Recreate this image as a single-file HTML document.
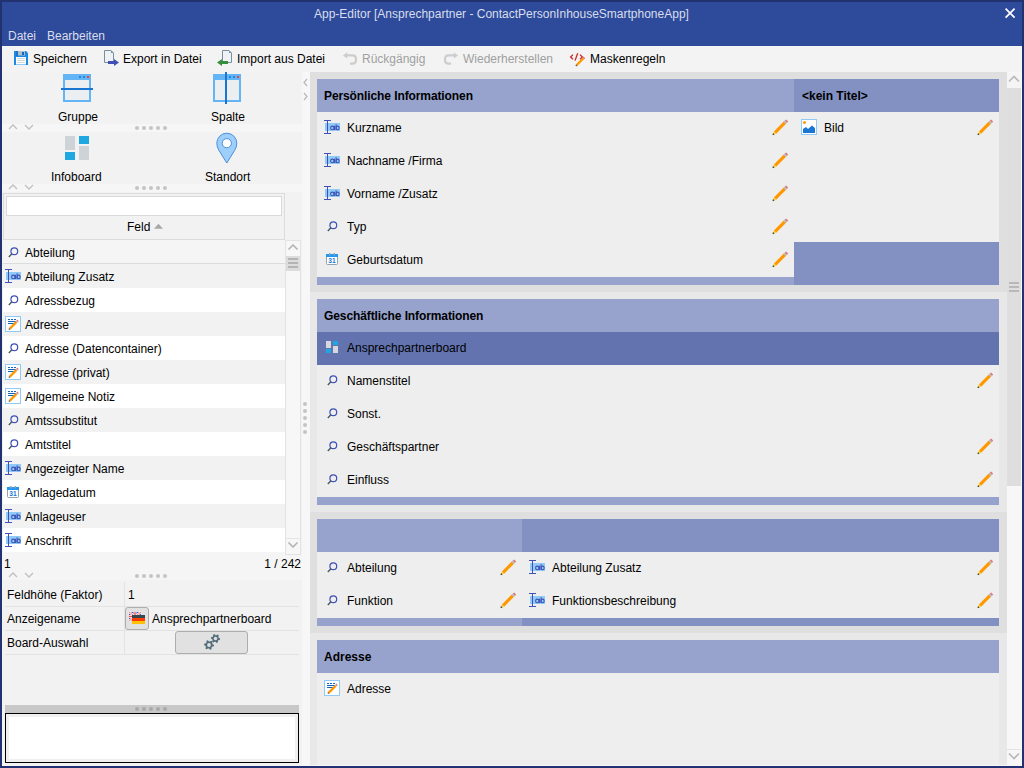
<!DOCTYPE html>
<html><head><meta charset="utf-8"><title>App-Editor</title>
<style>
*{margin:0;padding:0;box-sizing:border-box}
html,body{width:1024px;height:768px;overflow:hidden}
body{background:#223170;font-family:"Liberation Sans",sans-serif;font-size:12px;color:#000;position:relative}
.a{position:absolute}
.t{position:absolute;white-space:nowrap;line-height:14px}
svg{overflow:visible}
</style></head><body>
<div class="a" style="left:2px;top:2px;width:1020px;height:44px;background:#2e4a9a;"></div>
<div class="t" style="left:314px;top:7px;color:#d8deed">App-Editor [Ansprechpartner - ContactPersonInhouseSmartphoneApp]</div>
<svg class="a" style="left:1003px;top:7px" width="14" height="14" viewBox="0 0 14 14"><path d="M2.6 1.6L11.6 10.6M11.6 1.6L2.6 10.6" stroke="#fff" stroke-width="1.7"/></svg>
<div class="t" style="left:8px;top:29px;color:#d8deed">Datei</div>
<div class="t" style="left:47px;top:29px;color:#d8deed">Bearbeiten</div>
<div class="a" style="left:2px;top:46px;width:1020px;height:26px;background:#f3f3f3;"></div>
<svg class="a" style="left:14px;top:51px" width="14" height="14" viewBox="0 0 14 14"><path d="M0 0H12L14 2V14H0Z" fill="#1e88e5"/><rect x="2" y="0" width="2" height="5" fill="#1565c0" opacity="0.6"/><rect x="4" y="0" width="7" height="4.5" fill="#b0bec5"/><rect x="8" y="1" width="2" height="3" fill="#1565c0"/><rect x="2" y="6" width="10" height="7" fill="#fff"/><path d="M3.2 7.5H10.8M3.2 9.5H10.8M3.2 11.5H10.8" stroke="#cfd8dc" stroke-width="1"/><rect x="2" y="13" width="10" height="1" fill="#90caf9"/></svg>
<div class="t" style="left:33px;top:52px;">Speichern</div>
<svg class="a" style="left:103px;top:49px" width="17" height="18" viewBox="0 0 17 18"><path d="M1.5 1.5H8L10.5 4V13.5H1.5Z" fill="#eef2f7" stroke="#78909c" stroke-width="1"/><path d="M8 1.5V4H10.5Z" fill="#78909c"/><path d="M5 12H11V10L16 13.5L11 17V15H5Z" fill="#3f51b5"/></svg>
<div class="t" style="left:123px;top:52px;">Export in Datei</div>
<svg class="a" style="left:216px;top:49px" width="17" height="18" viewBox="0 0 17 18"><path d="M6.5 1.5H13L15.5 4V13.5H6.5Z" fill="#eef2f7" stroke="#78909c" stroke-width="1"/><path d="M13 1.5V4H15.5Z" fill="#78909c"/><path d="M12 12H6V10L1 13.5L6 17V15H12Z" fill="#388e3c"/></svg>
<div class="t" style="left:237px;top:52px;">Import aus Datei</div>
<svg class="a" style="left:342px;top:51px" width="16" height="15" viewBox="0 0 16 15"><path d="M1 4.4 L5.2 1.2 V7.6 Z" fill="#cdcdcd"/><path d="M5 4.4 H10.5 Q14 4.4 14 8.5 Q14 12.6 10.5 12.6 H8" stroke="#cdcdcd" stroke-width="2.3" fill="none"/></svg>
<div class="t" style="left:362px;top:52px;color:#a0a0a0">Rückgängig</div>
<svg class="a" style="left:442px;top:51px" width="17" height="15" viewBox="0 0 17 15"><path d="M16 4.4 L11.8 1.2 V7.6 Z" fill="#cdcdcd"/><path d="M12 4.4 H6.5 Q3 4.4 3 8.5 Q3 12.6 6.5 12.6 H9" stroke="#cdcdcd" stroke-width="2.3" fill="none"/></svg>
<div class="t" style="left:463px;top:52px;color:#a0a0a0">Wiederherstellen</div>
<svg class="a" style="left:570px;top:53px" width="16" height="14" viewBox="0 0 16 14"><path d="M3 1.6 L0.6 4 L3 6.3 M10 1.6 L12.4 4 L10 6.3 M7.7 0.2 L5 7.6" stroke="#c62828" stroke-width="1.3" fill="none"/><path d="M6.5 12.3 L13.5 5.3" stroke="#ff9800" stroke-width="2.3"/><path d="M13.4 5.4 L14.4 4.4" stroke="#e57373" stroke-width="2.2"/><path d="M5.9 12.9 L6.7 12.1" stroke="#455a64" stroke-width="1.4"/></svg>
<div class="t" style="left:590px;top:52px;">Maskenregeln</div>
<div class="a" style="left:2px;top:72px;width:300px;height:694px;background:#f2f2f2;"></div>
<div class="a" style="left:2px;top:72px;width:300px;height:52px;background:#f2f2f2;"></div>
<div class="a" style="left:2px;top:124px;width:300px;height:8px;background:#f6f6f6;"></div>
<div class="a" style="left:2px;top:132px;width:300px;height:52px;background:#f2f2f2;"></div>
<div class="a" style="left:2px;top:184px;width:300px;height:8px;background:#f6f6f6;"></div>
<svg class="a" style="left:8px;top:124px" width="28" height="6" viewBox="0 0 28 6"><path d="M1 5 L5 1 L9 5 M17 1 L21 5 L25 1" stroke="#c0c0c0" stroke-width="1.3" fill="none"/></svg>
<svg class="a" style="left:135px;top:126px" width="36" height="4" viewBox="0 0 36 4"><circle cx="2" cy="2" r="2" fill="#c4c4c4"/><circle cx="9" cy="2" r="2" fill="#c4c4c4"/><circle cx="16" cy="2" r="2" fill="#c4c4c4"/><circle cx="23" cy="2" r="2" fill="#c4c4c4"/><circle cx="30" cy="2" r="2" fill="#c4c4c4"/></svg>
<svg class="a" style="left:8px;top:184px" width="28" height="6" viewBox="0 0 28 6"><path d="M1 5 L5 1 L9 5 M17 1 L21 5 L25 1" stroke="#c0c0c0" stroke-width="1.3" fill="none"/></svg>
<svg class="a" style="left:135px;top:186px" width="36" height="4" viewBox="0 0 36 4"><circle cx="2" cy="2" r="2" fill="#c4c4c4"/><circle cx="9" cy="2" r="2" fill="#c4c4c4"/><circle cx="16" cy="2" r="2" fill="#c4c4c4"/><circle cx="23" cy="2" r="2" fill="#c4c4c4"/><circle cx="30" cy="2" r="2" fill="#c4c4c4"/></svg>
<svg class="a" style="left:61px;top:72px" width="33" height="32" viewBox="0 0 33 32"><rect x="3" y="3" width="26" height="26" fill="#eceff1" stroke="#64b5f6" stroke-width="2"/><rect x="2" y="2" width="28" height="6" fill="#64b5f6"/><rect x="18" y="4" width="2" height="2" fill="#1e88e5"/><rect x="22" y="4" width="2" height="2" fill="#1e88e5"/><rect x="26" y="4" width="2" height="2" fill="#f44336"/><rect x="0" y="16" width="32" height="2" fill="#1976d2"/></svg>
<div class="t" style="left:58px;top:110px;">Gruppe</div>
<svg class="a" style="left:212px;top:72px" width="30" height="33" viewBox="0 0 30 33"><rect x="2" y="3" width="26" height="26" fill="#eceff1" stroke="#64b5f6" stroke-width="2"/><rect x="1" y="2" width="28" height="6" fill="#64b5f6"/><rect x="17" y="4" width="2" height="2" fill="#1e88e5"/><rect x="21" y="4" width="2" height="2" fill="#1e88e5"/><rect x="25" y="4" width="2" height="2" fill="#f44336"/><rect x="13" y="0" width="2" height="32" fill="#1976d2"/></svg>
<div class="t" style="left:211px;top:110px;">Spalte</div>
<svg class="a" style="left:65px;top:136px" width="25" height="25" viewBox="0 0 25 25"><rect x="0" y="0" width="10" height="14" fill="#ced3d8"/><rect x="0" y="16" width="10" height="8" fill="#1ea7e0"/><rect x="14" y="0" width="10" height="8" fill="#1ea7e0"/><rect x="14" y="10" width="10" height="14" fill="#ced3d8"/></svg>
<div class="t" style="left:51px;top:170px;">Infoboard</div>
<svg class="a" style="left:216px;top:132px" width="22" height="32" viewBox="0 0 22 32"><path d="M10.8 31 L3 18.5 Q0.8 15 0.8 11.2 A10 10 0 0 1 20.8 11.2 Q20.8 15 18.6 18.5 Z" fill="#9ecffa" stroke="#4a8fd9" stroke-width="1"/><circle cx="10.8" cy="11.2" r="4.6" fill="#fff" stroke="#4a8fd9" stroke-width="1"/></svg>
<div class="t" style="left:205px;top:170px;">Standort</div>
<div class="a" style="left:3px;top:193px;width:282px;height:47px;background:#f2f2f2;border:1px solid #dcdcdc"></div>
<div class="a" style="left:6px;top:196px;width:276px;height:20px;background:#ffffff;border:1px solid #d9d9d9"></div>
<div class="t" style="left:127px;top:220px;">Feld</div>
<svg class="a" style="left:154px;top:223px" width="10" height="6" viewBox="0 0 10 6"><path d="M0 5.8 L4.5 0.8 L9 5.8Z" fill="#a8a8a8"/></svg>
<div class="a" style="left:3px;top:240px;width:282px;height:24px;background:#f5f5f5;"></div>
<div class="a" style="left:3px;top:263px;width:282px;height:1px;background:#dcdcdc;"></div>
<svg class="a" style="left:8px;top:247px" width="11" height="11" viewBox="0 0 11 11"><circle cx="6.3" cy="4.3" r="3.4" stroke="#3f51b5" stroke-width="1.2" fill="none"/><path d="M3.9 6.8 L0.8 9.9" stroke="#455a64" stroke-width="1.4"/></svg>
<div class="t" style="left:25px;top:246px;">Abteilung</div>
<div class="a" style="left:3px;top:264px;width:282px;height:24px;background:#f2f2f2;"></div>
<svg class="a" style="left:5px;top:269px" width="17" height="15" viewBox="0 0 17 15"><rect x="1" y="3" width="15" height="8" fill="#90caf9"/><path d="M0 0.5H7M0 13.5H7M3.5 0.5V13.5" stroke="#3f51b5" stroke-width="1" fill="none"/><ellipse cx="8.3" cy="7.9" rx="1.7" ry="1.8" stroke="#3f51b5" stroke-width="1.1" fill="none"/><path d="M10.4 5.8V10M12.1 4.2V10" stroke="#3f51b5" stroke-width="1.1"/><ellipse cx="13.6" cy="7.9" rx="1.6" ry="1.8" stroke="#3f51b5" stroke-width="1.1" fill="none"/></svg>
<div class="t" style="left:25px;top:270px;">Abteilung Zusatz</div>
<div class="a" style="left:3px;top:288px;width:282px;height:24px;background:#ffffff;"></div>
<svg class="a" style="left:8px;top:295px" width="11" height="11" viewBox="0 0 11 11"><circle cx="6.3" cy="4.3" r="3.4" stroke="#3f51b5" stroke-width="1.2" fill="none"/><path d="M3.9 6.8 L0.8 9.9" stroke="#455a64" stroke-width="1.4"/></svg>
<div class="t" style="left:25px;top:294px;">Adressbezug</div>
<div class="a" style="left:3px;top:312px;width:282px;height:24px;background:#f2f2f2;"></div>
<svg class="a" style="left:5px;top:316px" width="17" height="17" viewBox="0 0 17 17"><rect x="0.5" y="0.5" width="15" height="15" fill="#fff" stroke="#90caf9" stroke-width="1"/><path d="M3 3.5H5M6 3.5H8M9 3.5H11M3 5.5H11M3 7.5H9" stroke="#1565c0" stroke-width="1" fill="none"/><path d="M4.6 12.9 L11.6 5.9" stroke="#ff9800" stroke-width="2.2"/><path d="M11.5 6 L12.3 5.2" stroke="#b0bec5" stroke-width="2.2"/><path d="M12.2 5.3 L13.1 4.4" stroke="#e57373" stroke-width="2.2"/><path d="M3.9 13.6 L4.7 12.8" stroke="#455a64" stroke-width="1.4"/></svg>
<div class="t" style="left:25px;top:318px;">Adresse</div>
<div class="a" style="left:3px;top:336px;width:282px;height:24px;background:#ffffff;"></div>
<svg class="a" style="left:8px;top:343px" width="11" height="11" viewBox="0 0 11 11"><circle cx="6.3" cy="4.3" r="3.4" stroke="#3f51b5" stroke-width="1.2" fill="none"/><path d="M3.9 6.8 L0.8 9.9" stroke="#455a64" stroke-width="1.4"/></svg>
<div class="t" style="left:25px;top:342px;">Adresse (Datencontainer)</div>
<div class="a" style="left:3px;top:360px;width:282px;height:24px;background:#f2f2f2;"></div>
<svg class="a" style="left:5px;top:364px" width="17" height="17" viewBox="0 0 17 17"><rect x="0.5" y="0.5" width="15" height="15" fill="#fff" stroke="#90caf9" stroke-width="1"/><path d="M3 3.5H5M6 3.5H8M9 3.5H11M3 5.5H11M3 7.5H9" stroke="#1565c0" stroke-width="1" fill="none"/><path d="M4.6 12.9 L11.6 5.9" stroke="#ff9800" stroke-width="2.2"/><path d="M11.5 6 L12.3 5.2" stroke="#b0bec5" stroke-width="2.2"/><path d="M12.2 5.3 L13.1 4.4" stroke="#e57373" stroke-width="2.2"/><path d="M3.9 13.6 L4.7 12.8" stroke="#455a64" stroke-width="1.4"/></svg>
<div class="t" style="left:25px;top:366px;">Adresse (privat)</div>
<div class="a" style="left:3px;top:384px;width:282px;height:24px;background:#ffffff;"></div>
<svg class="a" style="left:5px;top:388px" width="17" height="17" viewBox="0 0 17 17"><rect x="0.5" y="0.5" width="15" height="15" fill="#fff" stroke="#90caf9" stroke-width="1"/><path d="M3 3.5H5M6 3.5H8M9 3.5H11M3 5.5H11M3 7.5H9" stroke="#1565c0" stroke-width="1" fill="none"/><path d="M4.6 12.9 L11.6 5.9" stroke="#ff9800" stroke-width="2.2"/><path d="M11.5 6 L12.3 5.2" stroke="#b0bec5" stroke-width="2.2"/><path d="M12.2 5.3 L13.1 4.4" stroke="#e57373" stroke-width="2.2"/><path d="M3.9 13.6 L4.7 12.8" stroke="#455a64" stroke-width="1.4"/></svg>
<div class="t" style="left:25px;top:390px;">Allgemeine Notiz</div>
<div class="a" style="left:3px;top:408px;width:282px;height:24px;background:#f2f2f2;"></div>
<svg class="a" style="left:8px;top:415px" width="11" height="11" viewBox="0 0 11 11"><circle cx="6.3" cy="4.3" r="3.4" stroke="#3f51b5" stroke-width="1.2" fill="none"/><path d="M3.9 6.8 L0.8 9.9" stroke="#455a64" stroke-width="1.4"/></svg>
<div class="t" style="left:25px;top:414px;">Amtssubstitut</div>
<div class="a" style="left:3px;top:432px;width:282px;height:24px;background:#ffffff;"></div>
<svg class="a" style="left:8px;top:439px" width="11" height="11" viewBox="0 0 11 11"><circle cx="6.3" cy="4.3" r="3.4" stroke="#3f51b5" stroke-width="1.2" fill="none"/><path d="M3.9 6.8 L0.8 9.9" stroke="#455a64" stroke-width="1.4"/></svg>
<div class="t" style="left:25px;top:438px;">Amtstitel</div>
<div class="a" style="left:3px;top:456px;width:282px;height:24px;background:#f2f2f2;"></div>
<svg class="a" style="left:5px;top:461px" width="17" height="15" viewBox="0 0 17 15"><rect x="1" y="3" width="15" height="8" fill="#90caf9"/><path d="M0 0.5H7M0 13.5H7M3.5 0.5V13.5" stroke="#3f51b5" stroke-width="1" fill="none"/><ellipse cx="8.3" cy="7.9" rx="1.7" ry="1.8" stroke="#3f51b5" stroke-width="1.1" fill="none"/><path d="M10.4 5.8V10M12.1 4.2V10" stroke="#3f51b5" stroke-width="1.1"/><ellipse cx="13.6" cy="7.9" rx="1.6" ry="1.8" stroke="#3f51b5" stroke-width="1.1" fill="none"/></svg>
<div class="t" style="left:25px;top:462px;">Angezeigter Name</div>
<div class="a" style="left:3px;top:480px;width:282px;height:24px;background:#ffffff;"></div>
<svg class="a" style="left:7px;top:486px" width="12" height="12" viewBox="0 0 12 12"><rect x="0.5" y="1.5" width="11" height="10" rx="1" fill="#fff" stroke="#90a4ae" stroke-width="1"/><rect x="0" y="1" width="12" height="3" fill="#2196f3"/><rect x="3" y="0" width="1.5" height="2.5" fill="#90a4ae"/><rect x="7.5" y="0" width="1.5" height="2.5" fill="#90a4ae"/><text x="6" y="10.4" font-family="Liberation Sans" font-size="6.6" font-weight="bold" fill="#1976d2" text-anchor="middle">31</text></svg>
<div class="t" style="left:25px;top:486px;">Anlagedatum</div>
<div class="a" style="left:3px;top:504px;width:282px;height:24px;background:#f2f2f2;"></div>
<svg class="a" style="left:5px;top:509px" width="17" height="15" viewBox="0 0 17 15"><rect x="1" y="3" width="15" height="8" fill="#90caf9"/><path d="M0 0.5H7M0 13.5H7M3.5 0.5V13.5" stroke="#3f51b5" stroke-width="1" fill="none"/><ellipse cx="8.3" cy="7.9" rx="1.7" ry="1.8" stroke="#3f51b5" stroke-width="1.1" fill="none"/><path d="M10.4 5.8V10M12.1 4.2V10" stroke="#3f51b5" stroke-width="1.1"/><ellipse cx="13.6" cy="7.9" rx="1.6" ry="1.8" stroke="#3f51b5" stroke-width="1.1" fill="none"/></svg>
<div class="t" style="left:25px;top:510px;">Anlageuser</div>
<div class="a" style="left:3px;top:528px;width:282px;height:24px;background:#ffffff;"></div>
<svg class="a" style="left:5px;top:533px" width="17" height="15" viewBox="0 0 17 15"><rect x="1" y="3" width="15" height="8" fill="#90caf9"/><path d="M0 0.5H7M0 13.5H7M3.5 0.5V13.5" stroke="#3f51b5" stroke-width="1" fill="none"/><ellipse cx="8.3" cy="7.9" rx="1.7" ry="1.8" stroke="#3f51b5" stroke-width="1.1" fill="none"/><path d="M10.4 5.8V10M12.1 4.2V10" stroke="#3f51b5" stroke-width="1.1"/><ellipse cx="13.6" cy="7.9" rx="1.6" ry="1.8" stroke="#3f51b5" stroke-width="1.1" fill="none"/></svg>
<div class="t" style="left:25px;top:534px;">Anschrift</div>
<div class="a" style="left:2px;top:552px;width:300px;height:28px;background:#f5f5f5;"></div>
<div class="a" style="left:285px;top:240px;width:16px;height:315px;background:#f7f7f7;border:1px solid #e3e3e3"></div>
<div class="a" style="left:286px;top:538px;width:14px;height:1px;background:#e3e3e3;"></div>
<svg class="a" style="left:287px;top:243px" width="12" height="8" viewBox="0 0 12 8"><path d="M1.5 6.5 L6 2 L10.5 6.5" stroke="#b0b0b0" stroke-width="1.5" fill="none"/></svg>
<div class="a" style="left:286px;top:256px;width:14px;height:15px;background:#dcdcdc;"></div>
<div class="a" style="left:288px;top:258px;width:10px;height:2px;background:#b4b4b4;"></div>
<div class="a" style="left:288px;top:262px;width:10px;height:2px;background:#b4b4b4;"></div>
<div class="a" style="left:288px;top:266px;width:10px;height:2px;background:#b4b4b4;"></div>
<svg class="a" style="left:287px;top:541px" width="12" height="8" viewBox="0 0 12 8"><path d="M1.5 1.5 L6 6 L10.5 1.5" stroke="#b0b0b0" stroke-width="1.5" fill="none"/></svg>
<div class="t" style="left:4px;top:557px;">1</div>
<div class="t" style="left:200px;width:101px;text-align:right;top:557px">1 / 242</div>
<svg class="a" style="left:8px;top:572px" width="28" height="6" viewBox="0 0 28 6"><path d="M1 5 L5 1 L9 5 M17 1 L21 5 L25 1" stroke="#c0c0c0" stroke-width="1.3" fill="none"/></svg>
<svg class="a" style="left:135px;top:574px" width="36" height="4" viewBox="0 0 36 4"><circle cx="2" cy="2" r="2" fill="#c4c4c4"/><circle cx="9" cy="2" r="2" fill="#c4c4c4"/><circle cx="16" cy="2" r="2" fill="#c4c4c4"/><circle cx="23" cy="2" r="2" fill="#c4c4c4"/><circle cx="30" cy="2" r="2" fill="#c4c4c4"/></svg>
<div class="a" style="left:5px;top:606px;width:294px;height:1px;background:#e3e3e3;"></div>
<div class="t" style="left:7px;top:588px;">Feldhöhe (Faktor)</div>
<div class="a" style="left:5px;top:630px;width:294px;height:1px;background:#e3e3e3;"></div>
<div class="t" style="left:7px;top:612px;">Anzeigename</div>
<div class="a" style="left:5px;top:654px;width:294px;height:1px;background:#e3e3e3;"></div>
<div class="t" style="left:7px;top:636px;">Board-Auswahl</div>
<div class="a" style="left:124px;top:582px;width:1px;height:72px;background:#e3e3e3;"></div>
<div class="t" style="left:128px;top:588px;">1</div>
<div class="a" style="left:125px;top:607px;width:24px;height:23px;background:#e1e1e1;border:1px solid #adadad;border-radius:3px"></div>
<svg class="a" style="left:128px;top:611px" width="18" height="14" viewBox="0 0 18 14"><rect x="1" y="1" width="12" height="9" fill="#3f51b5"/><path d="M1 1 L13 10 M13 1 L1 10" stroke="#fff" stroke-width="2.2"/><path d="M1 1 L13 10 M13 1 L1 10" stroke="#ef5350" stroke-width="0.8"/><path d="M7 1V10M1 5.5H13" stroke="#fff" stroke-width="3"/><path d="M7 1V10M1 5.5H13" stroke="#ef5350" stroke-width="1.4"/><rect x="4" y="4" width="13" height="3" fill="#37474f"/><rect x="4" y="7" width="13" height="3" fill="#ff3d00"/><rect x="4" y="10" width="13" height="3" fill="#ffc107"/></svg>
<div class="t" style="left:152px;top:612px;">Ansprechpartnerboard</div>
<div class="a" style="left:175px;top:631px;width:73px;height:23px;background:#e1e1e1;border:1px solid #adadad;border-radius:3px"></div>
<svg class="a" style="left:202px;top:632px" width="22" height="20" viewBox="0 0 22 20"><polygon points="12.00,13.00 11.83,14.29 10.12,14.80 9.55,15.55 9.50,17.33 8.29,17.83 7.00,16.60 6.07,16.48 4.50,17.33 3.46,16.54 3.88,14.80 3.52,13.93 2.00,13.00 2.17,11.71 3.88,11.20 4.45,10.45 4.50,8.67 5.71,8.17 7.00,9.40 7.93,9.52 9.50,8.67 10.54,9.46 10.12,11.20 10.48,12.07" fill="#546e7a"/><circle cx="7" cy="13" r="1.90" fill="#e1e1e1"/><polygon points="18.10,6.50 17.94,7.69 16.37,8.16 15.84,8.84 15.80,10.48 14.69,10.94 13.50,9.81 12.64,9.70 11.20,10.48 10.25,9.75 10.63,8.16 10.30,7.36 8.90,6.50 9.06,5.31 10.63,4.84 11.16,4.16 11.20,2.52 12.31,2.06 13.50,3.19 14.36,3.30 15.80,2.52 16.75,3.25 16.37,4.84 16.70,5.64" fill="#546e7a"/><circle cx="13.5" cy="6.5" r="1.75" fill="#e1e1e1"/></svg>
<div class="a" style="left:5px;top:705px;width:294px;height:8px;background:#c8c8c8;"></div>
<svg class="a" style="left:135px;top:707px" width="36" height="4" viewBox="0 0 36 4"><circle cx="2" cy="2" r="2" fill="#a9a9a9"/><circle cx="9" cy="2" r="2" fill="#a9a9a9"/><circle cx="16" cy="2" r="2" fill="#a9a9a9"/><circle cx="23" cy="2" r="2" fill="#a9a9a9"/><circle cx="30" cy="2" r="2" fill="#a9a9a9"/></svg>
<div class="a" style="left:5px;top:713px;width:294px;height:50px;background:#ffffff;border:1px solid #000;box-shadow:inset 0 0 0 3px #f0f0f0"></div>
<div class="a" style="left:302px;top:72px;width:8px;height:694px;background:#f7f7f7;"></div>
<svg class="a" style="left:302px;top:78px" width="7" height="24" viewBox="0 0 7 24"><path d="M5 1 L2 4.5 L5 8 M2 15 L5 18.5 L2 22" stroke="#b8b8b8" stroke-width="1.2" fill="none"/></svg>
<svg class="a" style="left:302px;top:402px" width="6" height="36" viewBox="0 0 6 36"><circle cx="3" cy="2" r="2" fill="#c4c4c4"/><circle cx="3" cy="9" r="2" fill="#c4c4c4"/><circle cx="3" cy="16" r="2" fill="#c4c4c4"/><circle cx="3" cy="23" r="2" fill="#c4c4c4"/><circle cx="3" cy="30" r="2" fill="#c4c4c4"/></svg>
<div class="a" style="left:310px;top:72px;width:697px;height:694px;background:#dfdfdf;"></div>
<div class="a" style="left:310px;top:72px;width:697px;height:220px;background:#dfdfdf;"></div>
<div class="a" style="left:317px;top:79px;width:477px;height:33px;background:#97a3cd;"></div>
<div class="a" style="left:794px;top:79px;width:205px;height:33px;background:#8391c2;"></div>
<div class="t" style="left:324px;top:89px;font-weight:bold;letter-spacing:-0.1px">Persönliche Informationen</div>
<div class="t" style="left:802px;top:89px;font-weight:bold">&lt;kein Titel&gt;</div>
<div class="a" style="left:317px;top:112px;width:682px;height:165px;background:#eeeeee;"></div>
<div class="a" style="left:794px;top:242px;width:205px;height:35px;background:#8391c2;"></div>
<div class="a" style="left:317px;top:277px;width:477px;height:8px;background:#97a3cd;"></div>
<div class="a" style="left:794px;top:277px;width:205px;height:8px;background:#8391c2;"></div>
<svg class="a" style="left:324px;top:120px" width="17" height="15" viewBox="0 0 17 15"><rect x="1" y="3" width="15" height="8" fill="#90caf9"/><path d="M0 0.5H7M0 13.5H7M3.5 0.5V13.5" stroke="#3f51b5" stroke-width="1" fill="none"/><ellipse cx="8.3" cy="7.9" rx="1.7" ry="1.8" stroke="#3f51b5" stroke-width="1.1" fill="none"/><path d="M10.4 5.8V10M12.1 4.2V10" stroke="#3f51b5" stroke-width="1.1"/><ellipse cx="13.6" cy="7.9" rx="1.6" ry="1.8" stroke="#3f51b5" stroke-width="1.1" fill="none"/></svg>
<div class="t" style="left:347px;top:121px;">Kurzname</div>
<svg class="a" style="left:772px;top:119px" width="17" height="17" viewBox="0 0 17 17"><path d="M3 13.6 L12.9 3.7" stroke="#ff9800" stroke-width="3.2"/><path d="M12.8 3.8 L14.1 2.5" stroke="#b0bec5" stroke-width="3.2"/><path d="M14 2.6 L15.1 1.5" stroke="#e57373" stroke-width="3"/><path d="M1.4 15.2 L3.2 13.4" stroke="#ffca28" stroke-width="2.2"/><path d="M0.8 15.8 L1.8 14.8" stroke="#37474f" stroke-width="1.6"/></svg>
<svg class="a" style="left:324px;top:153px" width="17" height="15" viewBox="0 0 17 15"><rect x="1" y="3" width="15" height="8" fill="#90caf9"/><path d="M0 0.5H7M0 13.5H7M3.5 0.5V13.5" stroke="#3f51b5" stroke-width="1" fill="none"/><ellipse cx="8.3" cy="7.9" rx="1.7" ry="1.8" stroke="#3f51b5" stroke-width="1.1" fill="none"/><path d="M10.4 5.8V10M12.1 4.2V10" stroke="#3f51b5" stroke-width="1.1"/><ellipse cx="13.6" cy="7.9" rx="1.6" ry="1.8" stroke="#3f51b5" stroke-width="1.1" fill="none"/></svg>
<div class="t" style="left:347px;top:154px;">Nachname /Firma</div>
<svg class="a" style="left:772px;top:152px" width="17" height="17" viewBox="0 0 17 17"><path d="M3 13.6 L12.9 3.7" stroke="#ff9800" stroke-width="3.2"/><path d="M12.8 3.8 L14.1 2.5" stroke="#b0bec5" stroke-width="3.2"/><path d="M14 2.6 L15.1 1.5" stroke="#e57373" stroke-width="3"/><path d="M1.4 15.2 L3.2 13.4" stroke="#ffca28" stroke-width="2.2"/><path d="M0.8 15.8 L1.8 14.8" stroke="#37474f" stroke-width="1.6"/></svg>
<svg class="a" style="left:324px;top:186px" width="17" height="15" viewBox="0 0 17 15"><rect x="1" y="3" width="15" height="8" fill="#90caf9"/><path d="M0 0.5H7M0 13.5H7M3.5 0.5V13.5" stroke="#3f51b5" stroke-width="1" fill="none"/><ellipse cx="8.3" cy="7.9" rx="1.7" ry="1.8" stroke="#3f51b5" stroke-width="1.1" fill="none"/><path d="M10.4 5.8V10M12.1 4.2V10" stroke="#3f51b5" stroke-width="1.1"/><ellipse cx="13.6" cy="7.9" rx="1.6" ry="1.8" stroke="#3f51b5" stroke-width="1.1" fill="none"/></svg>
<div class="t" style="left:347px;top:187px;">Vorname /Zusatz</div>
<svg class="a" style="left:772px;top:185px" width="17" height="17" viewBox="0 0 17 17"><path d="M3 13.6 L12.9 3.7" stroke="#ff9800" stroke-width="3.2"/><path d="M12.8 3.8 L14.1 2.5" stroke="#b0bec5" stroke-width="3.2"/><path d="M14 2.6 L15.1 1.5" stroke="#e57373" stroke-width="3"/><path d="M1.4 15.2 L3.2 13.4" stroke="#ffca28" stroke-width="2.2"/><path d="M0.8 15.8 L1.8 14.8" stroke="#37474f" stroke-width="1.6"/></svg>
<svg class="a" style="left:327px;top:221px" width="11" height="11" viewBox="0 0 11 11"><circle cx="6.3" cy="4.3" r="3.4" stroke="#3f51b5" stroke-width="1.2" fill="none"/><path d="M3.9 6.8 L0.8 9.9" stroke="#455a64" stroke-width="1.4"/></svg>
<div class="t" style="left:347px;top:220px;">Typ</div>
<svg class="a" style="left:772px;top:218px" width="17" height="17" viewBox="0 0 17 17"><path d="M3 13.6 L12.9 3.7" stroke="#ff9800" stroke-width="3.2"/><path d="M12.8 3.8 L14.1 2.5" stroke="#b0bec5" stroke-width="3.2"/><path d="M14 2.6 L15.1 1.5" stroke="#e57373" stroke-width="3"/><path d="M1.4 15.2 L3.2 13.4" stroke="#ffca28" stroke-width="2.2"/><path d="M0.8 15.8 L1.8 14.8" stroke="#37474f" stroke-width="1.6"/></svg>
<svg class="a" style="left:326px;top:253px" width="12" height="12" viewBox="0 0 12 12"><rect x="0.5" y="1.5" width="11" height="10" rx="1" fill="#fff" stroke="#90a4ae" stroke-width="1"/><rect x="0" y="1" width="12" height="3" fill="#2196f3"/><rect x="3" y="0" width="1.5" height="2.5" fill="#90a4ae"/><rect x="7.5" y="0" width="1.5" height="2.5" fill="#90a4ae"/><text x="6" y="10.4" font-family="Liberation Sans" font-size="6.6" font-weight="bold" fill="#1976d2" text-anchor="middle">31</text></svg>
<div class="t" style="left:347px;top:253px;">Geburtsdatum</div>
<svg class="a" style="left:772px;top:251px" width="17" height="17" viewBox="0 0 17 17"><path d="M3 13.6 L12.9 3.7" stroke="#ff9800" stroke-width="3.2"/><path d="M12.8 3.8 L14.1 2.5" stroke="#b0bec5" stroke-width="3.2"/><path d="M14 2.6 L15.1 1.5" stroke="#e57373" stroke-width="3"/><path d="M1.4 15.2 L3.2 13.4" stroke="#ffca28" stroke-width="2.2"/><path d="M0.8 15.8 L1.8 14.8" stroke="#37474f" stroke-width="1.6"/></svg>
<svg class="a" style="left:801px;top:119px" width="16" height="16" viewBox="0 0 16 16"><rect x="0.5" y="0.5" width="15" height="15" fill="#fff" stroke="#90caf9" stroke-width="1"/><circle cx="3.5" cy="3.5" r="1.5" fill="#ff9800"/><path d="M2 14 V10 L5 8 L7 10 L11 6.5 L14 9 V14 Z" fill="#1976d2"/></svg>
<div class="t" style="left:824px;top:121px;">Bild</div>
<svg class="a" style="left:977px;top:119px" width="17" height="17" viewBox="0 0 17 17"><path d="M3 13.6 L12.9 3.7" stroke="#ff9800" stroke-width="3.2"/><path d="M12.8 3.8 L14.1 2.5" stroke="#b0bec5" stroke-width="3.2"/><path d="M14 2.6 L15.1 1.5" stroke="#e57373" stroke-width="3"/><path d="M1.4 15.2 L3.2 13.4" stroke="#ffca28" stroke-width="2.2"/><path d="M0.8 15.8 L1.8 14.8" stroke="#37474f" stroke-width="1.6"/></svg>
<div class="a" style="left:310px;top:292px;width:697px;height:220px;background:#e8e8e8;"></div>
<div class="a" style="left:317px;top:299px;width:682px;height:33px;background:#97a3cd;"></div>
<div class="t" style="left:324px;top:309px;font-weight:bold;letter-spacing:-0.1px">Geschäftliche Informationen</div>
<div class="a" style="left:317px;top:332px;width:682px;height:33px;background:#6373af;"></div>
<svg class="a" style="left:326px;top:341px" width="13" height="13" viewBox="0 0 13 13"><rect x="0" y="0" width="5" height="7" fill="#d5d8dc"/><rect x="0" y="8" width="5" height="4" fill="#1ea7e0"/><rect x="7" y="0" width="5" height="4" fill="#1ea7e0"/><rect x="7" y="5" width="5" height="7" fill="#d5d8dc"/></svg>
<div class="t" style="left:347px;top:341px;">Ansprechpartnerboard</div>
<div class="a" style="left:317px;top:365px;width:682px;height:132px;background:#eeeeee;"></div>
<svg class="a" style="left:327px;top:375px" width="11" height="11" viewBox="0 0 11 11"><circle cx="6.3" cy="4.3" r="3.4" stroke="#3f51b5" stroke-width="1.2" fill="none"/><path d="M3.9 6.8 L0.8 9.9" stroke="#455a64" stroke-width="1.4"/></svg>
<div class="t" style="left:347px;top:374px;">Namenstitel</div>
<svg class="a" style="left:977px;top:372px" width="17" height="17" viewBox="0 0 17 17"><path d="M3 13.6 L12.9 3.7" stroke="#ff9800" stroke-width="3.2"/><path d="M12.8 3.8 L14.1 2.5" stroke="#b0bec5" stroke-width="3.2"/><path d="M14 2.6 L15.1 1.5" stroke="#e57373" stroke-width="3"/><path d="M1.4 15.2 L3.2 13.4" stroke="#ffca28" stroke-width="2.2"/><path d="M0.8 15.8 L1.8 14.8" stroke="#37474f" stroke-width="1.6"/></svg>
<svg class="a" style="left:327px;top:408px" width="11" height="11" viewBox="0 0 11 11"><circle cx="6.3" cy="4.3" r="3.4" stroke="#3f51b5" stroke-width="1.2" fill="none"/><path d="M3.9 6.8 L0.8 9.9" stroke="#455a64" stroke-width="1.4"/></svg>
<div class="t" style="left:347px;top:407px;">Sonst.</div>
<svg class="a" style="left:327px;top:441px" width="11" height="11" viewBox="0 0 11 11"><circle cx="6.3" cy="4.3" r="3.4" stroke="#3f51b5" stroke-width="1.2" fill="none"/><path d="M3.9 6.8 L0.8 9.9" stroke="#455a64" stroke-width="1.4"/></svg>
<div class="t" style="left:347px;top:440px;">Geschäftspartner</div>
<svg class="a" style="left:977px;top:438px" width="17" height="17" viewBox="0 0 17 17"><path d="M3 13.6 L12.9 3.7" stroke="#ff9800" stroke-width="3.2"/><path d="M12.8 3.8 L14.1 2.5" stroke="#b0bec5" stroke-width="3.2"/><path d="M14 2.6 L15.1 1.5" stroke="#e57373" stroke-width="3"/><path d="M1.4 15.2 L3.2 13.4" stroke="#ffca28" stroke-width="2.2"/><path d="M0.8 15.8 L1.8 14.8" stroke="#37474f" stroke-width="1.6"/></svg>
<svg class="a" style="left:327px;top:474px" width="11" height="11" viewBox="0 0 11 11"><circle cx="6.3" cy="4.3" r="3.4" stroke="#3f51b5" stroke-width="1.2" fill="none"/><path d="M3.9 6.8 L0.8 9.9" stroke="#455a64" stroke-width="1.4"/></svg>
<div class="t" style="left:347px;top:473px;">Einfluss</div>
<svg class="a" style="left:977px;top:471px" width="17" height="17" viewBox="0 0 17 17"><path d="M3 13.6 L12.9 3.7" stroke="#ff9800" stroke-width="3.2"/><path d="M12.8 3.8 L14.1 2.5" stroke="#b0bec5" stroke-width="3.2"/><path d="M14 2.6 L15.1 1.5" stroke="#e57373" stroke-width="3"/><path d="M1.4 15.2 L3.2 13.4" stroke="#ffca28" stroke-width="2.2"/><path d="M0.8 15.8 L1.8 14.8" stroke="#37474f" stroke-width="1.6"/></svg>
<div class="a" style="left:317px;top:497px;width:682px;height:8px;background:#97a3cd;"></div>
<div class="a" style="left:310px;top:512px;width:697px;height:121px;background:#dfdfdf;"></div>
<div class="a" style="left:317px;top:519px;width:205px;height:33px;background:#97a3cd;"></div>
<div class="a" style="left:522px;top:519px;width:477px;height:33px;background:#8391c2;"></div>
<div class="a" style="left:317px;top:552px;width:682px;height:66px;background:#eeeeee;"></div>
<svg class="a" style="left:327px;top:562px" width="11" height="11" viewBox="0 0 11 11"><circle cx="6.3" cy="4.3" r="3.4" stroke="#3f51b5" stroke-width="1.2" fill="none"/><path d="M3.9 6.8 L0.8 9.9" stroke="#455a64" stroke-width="1.4"/></svg>
<div class="t" style="left:347px;top:561px;">Abteilung</div>
<svg class="a" style="left:500px;top:559px" width="17" height="17" viewBox="0 0 17 17"><path d="M3 13.6 L12.9 3.7" stroke="#ff9800" stroke-width="3.2"/><path d="M12.8 3.8 L14.1 2.5" stroke="#b0bec5" stroke-width="3.2"/><path d="M14 2.6 L15.1 1.5" stroke="#e57373" stroke-width="3"/><path d="M1.4 15.2 L3.2 13.4" stroke="#ffca28" stroke-width="2.2"/><path d="M0.8 15.8 L1.8 14.8" stroke="#37474f" stroke-width="1.6"/></svg>
<svg class="a" style="left:529px;top:560px" width="17" height="15" viewBox="0 0 17 15"><rect x="1" y="3" width="15" height="8" fill="#90caf9"/><path d="M0 0.5H7M0 13.5H7M3.5 0.5V13.5" stroke="#3f51b5" stroke-width="1" fill="none"/><ellipse cx="8.3" cy="7.9" rx="1.7" ry="1.8" stroke="#3f51b5" stroke-width="1.1" fill="none"/><path d="M10.4 5.8V10M12.1 4.2V10" stroke="#3f51b5" stroke-width="1.1"/><ellipse cx="13.6" cy="7.9" rx="1.6" ry="1.8" stroke="#3f51b5" stroke-width="1.1" fill="none"/></svg>
<div class="t" style="left:552px;top:561px;">Abteilung Zusatz</div>
<svg class="a" style="left:977px;top:559px" width="17" height="17" viewBox="0 0 17 17"><path d="M3 13.6 L12.9 3.7" stroke="#ff9800" stroke-width="3.2"/><path d="M12.8 3.8 L14.1 2.5" stroke="#b0bec5" stroke-width="3.2"/><path d="M14 2.6 L15.1 1.5" stroke="#e57373" stroke-width="3"/><path d="M1.4 15.2 L3.2 13.4" stroke="#ffca28" stroke-width="2.2"/><path d="M0.8 15.8 L1.8 14.8" stroke="#37474f" stroke-width="1.6"/></svg>
<svg class="a" style="left:327px;top:595px" width="11" height="11" viewBox="0 0 11 11"><circle cx="6.3" cy="4.3" r="3.4" stroke="#3f51b5" stroke-width="1.2" fill="none"/><path d="M3.9 6.8 L0.8 9.9" stroke="#455a64" stroke-width="1.4"/></svg>
<div class="t" style="left:347px;top:594px;">Funktion</div>
<svg class="a" style="left:500px;top:592px" width="17" height="17" viewBox="0 0 17 17"><path d="M3 13.6 L12.9 3.7" stroke="#ff9800" stroke-width="3.2"/><path d="M12.8 3.8 L14.1 2.5" stroke="#b0bec5" stroke-width="3.2"/><path d="M14 2.6 L15.1 1.5" stroke="#e57373" stroke-width="3"/><path d="M1.4 15.2 L3.2 13.4" stroke="#ffca28" stroke-width="2.2"/><path d="M0.8 15.8 L1.8 14.8" stroke="#37474f" stroke-width="1.6"/></svg>
<svg class="a" style="left:529px;top:593px" width="17" height="15" viewBox="0 0 17 15"><rect x="1" y="3" width="15" height="8" fill="#90caf9"/><path d="M0 0.5H7M0 13.5H7M3.5 0.5V13.5" stroke="#3f51b5" stroke-width="1" fill="none"/><ellipse cx="8.3" cy="7.9" rx="1.7" ry="1.8" stroke="#3f51b5" stroke-width="1.1" fill="none"/><path d="M10.4 5.8V10M12.1 4.2V10" stroke="#3f51b5" stroke-width="1.1"/><ellipse cx="13.6" cy="7.9" rx="1.6" ry="1.8" stroke="#3f51b5" stroke-width="1.1" fill="none"/></svg>
<div class="t" style="left:552px;top:594px;">Funktionsbeschreibung</div>
<svg class="a" style="left:977px;top:592px" width="17" height="17" viewBox="0 0 17 17"><path d="M3 13.6 L12.9 3.7" stroke="#ff9800" stroke-width="3.2"/><path d="M12.8 3.8 L14.1 2.5" stroke="#b0bec5" stroke-width="3.2"/><path d="M14 2.6 L15.1 1.5" stroke="#e57373" stroke-width="3"/><path d="M1.4 15.2 L3.2 13.4" stroke="#ffca28" stroke-width="2.2"/><path d="M0.8 15.8 L1.8 14.8" stroke="#37474f" stroke-width="1.6"/></svg>
<div class="a" style="left:317px;top:618px;width:205px;height:8px;background:#97a3cd;"></div>
<div class="a" style="left:522px;top:618px;width:477px;height:8px;background:#8391c2;"></div>
<div class="a" style="left:310px;top:633px;width:697px;height:133px;background:#e8e8e8;"></div>
<div class="a" style="left:317px;top:640px;width:682px;height:33px;background:#97a3cd;"></div>
<div class="t" style="left:324px;top:650px;font-weight:bold">Adresse</div>
<div class="a" style="left:317px;top:673px;width:682px;height:93px;background:#eeeeee;"></div>
<svg class="a" style="left:324px;top:680px" width="17" height="17" viewBox="0 0 17 17"><rect x="0.5" y="0.5" width="15" height="15" fill="#fff" stroke="#90caf9" stroke-width="1"/><path d="M3 3.5H5M6 3.5H8M9 3.5H11M3 5.5H11M3 7.5H9" stroke="#1565c0" stroke-width="1" fill="none"/><path d="M4.6 12.9 L11.6 5.9" stroke="#ff9800" stroke-width="2.2"/><path d="M11.5 6 L12.3 5.2" stroke="#b0bec5" stroke-width="2.2"/><path d="M12.2 5.3 L13.1 4.4" stroke="#e57373" stroke-width="2.2"/><path d="M3.9 13.6 L4.7 12.8" stroke="#455a64" stroke-width="1.4"/></svg>
<div class="t" style="left:347px;top:682px;">Adresse</div>
<div class="a" style="left:1007px;top:72px;width:15px;height:694px;background:#f7f7f7;"></div>
<div class="a" style="left:1007px;top:73px;width:14px;height:15px;background:#f5f5f5;"></div>
<svg class="a" style="left:1007px;top:74px" width="14" height="9" viewBox="0 0 14 9"><path d="M2 7.5 L7 2.5 L12 7.5" stroke="#b8b8b8" stroke-width="1.6" fill="none"/></svg>
<div class="a" style="left:1007px;top:88px;width:14px;height:398px;background:#dedede;"></div>
<div class="a" style="left:1009px;top:282px;width:10px;height:2px;background:#b8b8b8;"></div>
<div class="a" style="left:1009px;top:286px;width:10px;height:2px;background:#b8b8b8;"></div>
<div class="a" style="left:1009px;top:290px;width:10px;height:2px;background:#b8b8b8;"></div>
<div class="a" style="left:1007px;top:749px;width:14px;height:1px;background:#e3e3e3;"></div>
<svg class="a" style="left:1007px;top:751px" width="14" height="10" viewBox="0 0 14 10"><path d="M2 2.5 L7 7.5 L12 2.5" stroke="#b8b8b8" stroke-width="1.6" fill="none"/></svg>
<div class="a" style="left:2px;top:765px;width:1020px;height:1px;background:#f7f7f7;"></div>
</body></html>
